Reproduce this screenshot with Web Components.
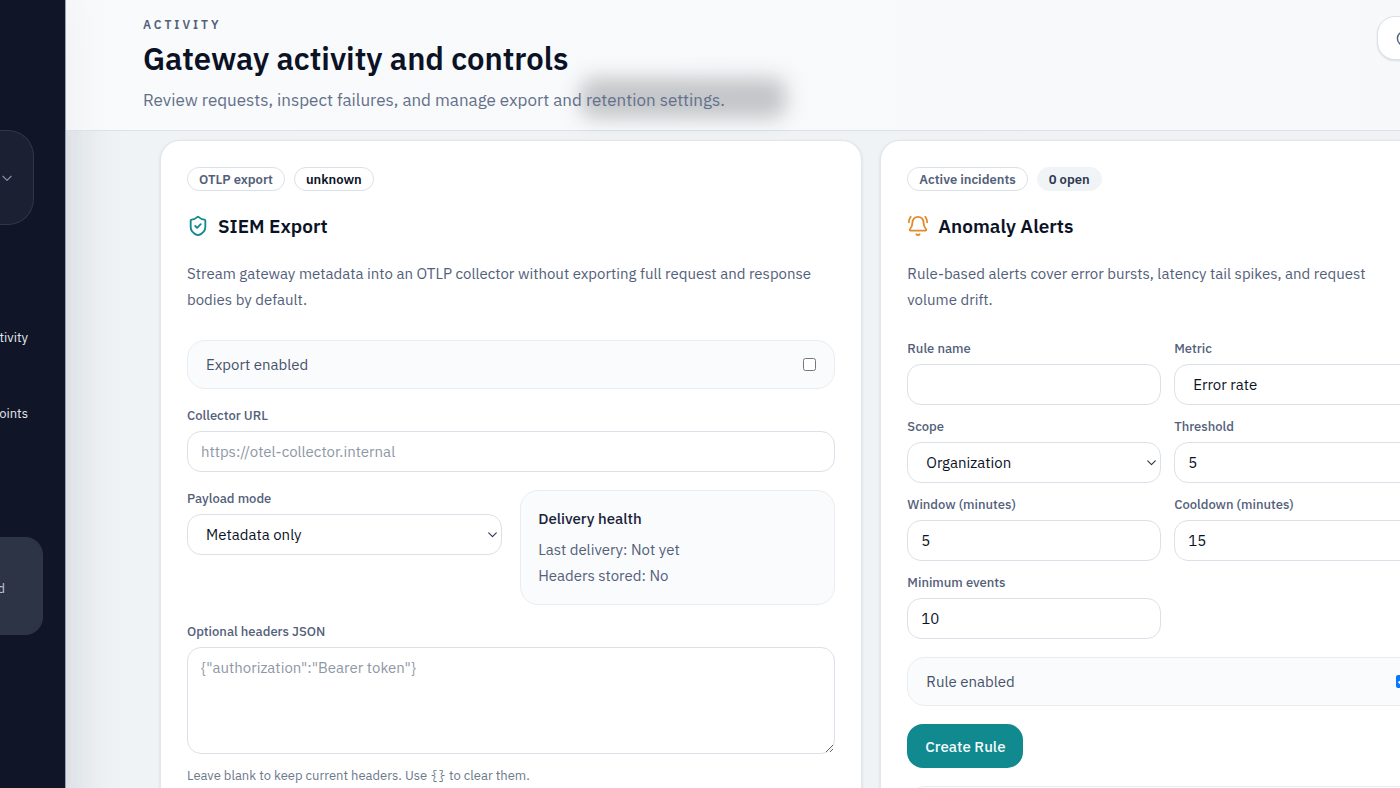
<!DOCTYPE html>
<html lang="en">
<head>
<meta charset="utf-8">
<title>Gateway activity and controls</title>
<style>
    html, body {
        margin: 0;
        height: 100%;
        overflow: hidden;
    }

    body {
        --ink: #0b1226;
        --muted: #53607a;
        --line: #dae1e8;
        --line-soft: #e9edf1;
        --teal: #10898f;
        --text: 15px;
        --small: 13px;
        background: #eff3f6;
        color: var(--ink);
        font-family: "IBM Plex Sans", Roboto, "Noto Sans", sans-serif;
        font-size: var(--text);
    }
</style>
</head>
<body>
<app-shell>
    <side-nav slot="nav"></side-nav>
    <page-header slot="header" eyebrow="ACTIVITY" heading="Gateway activity and controls">
        Review requests, inspect failures, and manage export and retention settings.
    </page-header>

    <panel-card heading="SIEM Export">
        <status-pill slot="pills">OTLP export</status-pill>
        <status-pill slot="pills" tone="strong">unknown</status-pill>
        <ui-icon slot="icon" name="shield"></ui-icon>
        <span slot="intro">Stream gateway metadata into an OTLP collector without exporting full request and response bodies by default.</span>
        <toggle-row label="Export enabled"></toggle-row>
        <form-field label="Collector URL" placeholder="https://otel-collector.internal"></form-field>
        <field-grid wide>
            <form-field label="Payload mode" kind="select" value="Metadata only"></form-field>
            <health-box heading="Delivery health">
                <span>Last delivery: Not yet</span>
                <span>Headers stored: No</span>
            </health-box>
        </field-grid>
        <form-field label="Optional headers JSON" kind="textarea" placeholder='{"authorization":"Bearer token"}'>
            <help-text slot="help">Leave blank to keep current headers. Use <code>{}</code> to clear them.</help-text>
        </form-field>
    </panel-card>

    <panel-card heading="Anomaly Alerts">
        <status-pill slot="pills">Active incidents</status-pill>
        <status-pill slot="pills" tone="filled">0 open</status-pill>
        <ui-icon slot="icon" name="bell"></ui-icon>
        <span slot="intro">Rule-based alerts cover error bursts, latency tail spikes, and request volume drift.</span>
        <field-grid>
            <form-field label="Rule name"></form-field>
            <form-field label="Metric" kind="select" value="Error rate"></form-field>
            <form-field label="Scope" kind="select" value="Organization"></form-field>
            <form-field label="Threshold" value="5"></form-field>
            <form-field label="Window (minutes)" value="5"></form-field>
            <form-field label="Cooldown (minutes)" value="15"></form-field>
            <form-field label="Minimum events" value="10"></form-field>
        </field-grid>
        <toggle-row label="Rule enabled" checked></toggle-row>
        <action-button>Create Rule</action-button>
        <health-box></health-box>
    </panel-card>
</app-shell>

<script>
const icons = {
    shield: `<path d="M20 13c0 5-3.5 7.5-7.66 8.95a1 1 0 0 1-.67-.01C7.5 20.5 4 18 4 13V6a1 1 0 0 1 1-1c2 0 4.5-1.2 6.24-2.72a1.17 1.17 0 0 1 1.52 0C14.51 3.81 17 5 19 5a1 1 0 0 1 1 1z"/><path d="m9 12 2 2 4-4"/>`,
    bell: `<path d="M10.268 21a2 2 0 0 0 3.464 0"/><path d="M22 8c0-2.3-.8-4.3-2-6"/><path d="M3.262 15.326A1 1 0 0 0 4 17h16a1 1 0 0 0 .74-1.673C19.41 13.956 18 12.499 18 8A6 6 0 0 0 6 8c0 4.499-1.411 5.956-2.738 7.326"/><path d="M4 2C2.8 3.7 2 5.7 2 8"/>`,
    chevron: `<path d="m5 9 7 7 7-7"/>`,
    clock: `<circle cx="12" cy="12" r="10"/><path d="M12 6v6l4 2"/>`
};

class AppShell extends HTMLElement {
    constructor() {
        super();
        this.attachShadow({ mode: "open" }).innerHTML = /* html */ `
        <style>
            /* the layout is wider than the window and runs off its right edge */
            :host {
                display: grid;
                grid-template-columns: 66px minmax(0, 1fr);
                width: calc(100vw + 150px);
                height: 100vh;
                overflow: hidden;
            }

            .main {
                min-width: 0;
            }

            .panels {
                display: grid;
                grid-template-columns: minmax(0, 11fr) minmax(0, 9fr);
                gap: 18px;
                align-items: start;
                padding: 9px 95px 40px 94px;
            }
        </style>
        <slot name="nav"></slot>
        <div class="main">
            <slot name="header"></slot>
            <main class="panels"><slot></slot></main>
        </div>
        `;
    }
}

class SideNav extends HTMLElement {
    constructor() {
        super();
        this.attachShadow({ mode: "open" }).innerHTML = /* html */ `
        <style>
            :host {
                display: block;
                box-sizing: border-box;
                background: #101628;
                border-right: 1px solid #98a1b2;
                box-shadow: 0 0 56px rgba(20, 26, 36, 0.16);
                color: #e3e7ee;
                font-size: var(--small);
            }

            nav {
                display: flex;
                flex-direction: column;
                align-items: flex-start;
                padding-top: 130px;
            }

            .switcher, .account {
                box-sizing: border-box;
                display: flex;
                align-items: center;
                border: 1px solid #2f3648;
                border-left: 0;
            }

            .switcher {
                width: 34px;
                height: 95px;
                padding: 0;
                background: #1b2133;
                border-radius: 0 26px 26px 0;
                color: #8390a5;
            }

            .account {
                justify-content: flex-end;
                width: 43px;
                height: 98px;
                margin-top: 113px;
                background: #2d3445;
                border-radius: 0 18px 18px 0;
                padding: 4px 37px 0 0;
                color: #c0c6d1;
            }

            a {
                width: 28px;
                line-height: 20px;
                color: inherit;
                text-decoration: none;
                display: flex;
                justify-content: flex-end;
            }

            .first {
                margin-top: 103px;
            }

            .second {
                margin-top: 56px;
            }
        </style>
        <nav>
            <button class="switcher" aria-label="Switch workspace"><ui-icon name="chevron" size="14"></ui-icon></button>
            <a class="first" href="#activity">tivity</a>
            <a class="second" href="#endpoints">oints</a>
            <div class="account">d</div>
        </nav>
        `;
    }
}

class PageHeader extends HTMLElement {
    constructor() {
        super();
        this.attachShadow({ mode: "open" }).innerHTML = /* html */ `
        <style>
            :host {
                display: block;
                position: relative;
                box-sizing: border-box;
                background: linear-gradient(90deg, rgba(250, 251, 252, 0.7), #f9fafb 70px, #f7f9fa 60%, #f6f8fa);
                border-bottom: 1px solid #dbe1e7;
            }

            header {
                position: relative;
                display: flex;
                justify-content: space-between;
                align-items: flex-start;
                padding: 16px 77px;
            }

            .eyebrow {
                margin: 0;
                font-size: 12px;
                font-weight: 600;
                line-height: 18px;
                letter-spacing: 3px;
                color: var(--muted);
            }

            h1 {
                margin: 4px 0 6px;
                font-size: 31px;
                font-weight: 600;
                line-height: 42px;
            }

            .lead {
                margin: 0;
                font-size: 17px;
                line-height: 28px;
                color: #64708a;
            }

            /* dark smudge of whatever scrolls under the frosted header */
            .smudge {
                position: absolute;
                left: 514px;
                top: 78px;
                width: 206px;
                height: 40px;
                border-radius: 14px;
                background: rgba(20, 26, 36, 0.23);
                filter: blur(10px);
            }

            button {
                box-sizing: border-box;
                width: 96px;
                height: 44px;
                padding: 0 18px;
                display: flex;
                align-items: center;
                color: var(--muted);
                background: #fff;
                border: 1px solid var(--line);
                border-radius: 18px;
                box-shadow: 0 1px 2px rgba(15, 23, 42, 0.12);
            }
        </style>
        <div class="smudge"></div>
        <header>
            <div>
                <p class="eyebrow"></p>
                <h1></h1>
                <p class="lead"><slot></slot></p>
            </div>
            <button aria-label="History"><ui-icon name="clock" size="17"></ui-icon></button>
        </header>
        `;
    }

    connectedCallback() {
        this.shadowRoot.querySelector('.eyebrow').textContent = this.getAttribute('eyebrow');
        this.shadowRoot.querySelector('h1').textContent = this.getAttribute('heading');
    }
}

class PanelCard extends HTMLElement {
    constructor() {
        super();
        this.attachShadow({ mode: "open" }).innerHTML = /* html */ `
        <style>
            :host {
                display: block;
                box-sizing: border-box;
                min-width: 0;
                padding: 26px;
                background: #fff;
                border: 1px solid #e2e7eb;
                border-radius: 20px;
                box-shadow: 0 1px 3px rgba(15, 23, 42, 0.12);
            }

            .pills {
                display: flex;
                gap: 9px;
            }

            h2 {
                display: flex;
                align-items: center;
                gap: 9px;
                margin: 22px 0;
                font-size: 19px;
                font-weight: 600;
                line-height: 26px;
            }

            .intro {
                margin: 0 0 27px;
                padding-right: 18px;
                line-height: 26px;
                color: var(--muted);
            }

            .body {
                display: flex;
                flex-direction: column;
                gap: 18px;
            }
        </style>
        <div class="pills"><slot name="pills"></slot></div>
        <h2><slot name="icon"></slot><span class="title"></span></h2>
        <p class="intro"><slot name="intro"></slot></p>
        <div class="body"><slot></slot></div>
        `;
    }

    connectedCallback() {
        this.shadowRoot.querySelector('.title').textContent = this.getAttribute('heading');
    }
}

class StatusPill extends HTMLElement {
    constructor() {
        super();
        this.attachShadow({ mode: "open" }).innerHTML = /* html */ `
        <style>
            :host {
                box-sizing: border-box;
                display: inline-flex;
                align-items: center;
                height: 24px;
                padding: 0 11px;
                border: 1px solid var(--line);
                border-radius: 12px;
                font-size: 13px;
                font-weight: 600;
                color: var(--muted);
            }

            :host([tone="strong"]) {
                color: var(--ink);
            }

            :host([tone="filled"]) {
                color: #2c3850;
                background: #f0f4f7;
                border-color: #f0f4f7;
            }
        </style>
        <slot></slot>
        `;
    }
}

class UiIcon extends HTMLElement {
    constructor() {
        super();
        this.attachShadow({ mode: "open" });
    }

    connectedCallback() {
        const size = this.getAttribute('size') || 22;

        this.shadowRoot.innerHTML = /* html */ `
        <style>
            :host {
                display: inline-flex;
                flex: none;
            }

            :host([name="shield"]) {
                color: var(--teal);
            }

            :host([name="bell"]) {
                color: #e28a2b;
            }
        </style>
        <svg width="${size}" height="${size}" viewBox="0 0 24 24" fill="none" stroke="currentColor"
            stroke-width="2" stroke-linecap="round" stroke-linejoin="round" aria-hidden="true">${icons[this.getAttribute('name')]}</svg>
        `;
    }
}

class FieldGrid extends HTMLElement {
    constructor() {
        super();
        this.attachShadow({ mode: "open" }).innerHTML = /* html */ `
        <style>
            :host {
                display: grid;
                grid-template-columns: repeat(2, minmax(0, 1fr));
                gap: 13px;
                align-items: start;
            }

            :host([wide]) {
                gap: 18px;
            }
        </style>
        <slot></slot>
        `;
    }
}

class FormField extends HTMLElement {
    constructor() {
        super();
        this.attachShadow({ mode: "open" });
    }

    connectedCallback() {
        this.shadowRoot.innerHTML = /* html */ `
        <style>
            :host {
                display: block;
            }

            label {
                display: block;
                margin-bottom: 7px;
                font-size: var(--small);
                font-weight: 500;
                line-height: 17px;
                color: var(--muted);
            }

            .control {
                position: relative;
                display: flex;
            }

            input, select, textarea {
                box-sizing: border-box;
                width: 100%;
                height: 41px;
                margin: 0;
                padding: 0 13px;
                color: var(--ink);
                background: #fff;
                border: 1px solid var(--line);
                border-radius: 14px;
                font: inherit;
                outline: none;
            }

            select {
                appearance: none;
                padding: 0 18px;
            }

            textarea {
                height: 107px;
                padding: 8px 13px;
                line-height: 24px;
                resize: vertical;
            }

            ::placeholder {
                color: #8f98a6;
                opacity: 1;
            }

            ui-icon {
                position: absolute;
                right: 3px;
                top: 14px;
                color: #28344a;
                pointer-events: none;
            }
        </style>
        <label for="control"></label>
        <div class="control"></div>
        <slot name="help"></slot>
        `;

        const kind = this.getAttribute('kind') || 'input';
        const value = this.getAttribute('value') || '';
        const control = document.createElement(kind);
        const wrap = this.shadowRoot.querySelector('.control');

        this.shadowRoot.querySelector('label').textContent = this.getAttribute('label');
        control.id = 'control';
        wrap.appendChild(control);

        if (kind === 'select') {
            control.add(new Option(value));
            const arrow = document.createElement('ui-icon');
            arrow.setAttribute('name', 'chevron');
            arrow.setAttribute('size', '13');
            wrap.appendChild(arrow);
        } else {
            control.value = value;
            control.placeholder = this.getAttribute('placeholder') || '';
        }
    }
}

class HelpText extends HTMLElement {
    constructor() {
        super();
        this.attachShadow({ mode: "open" }).innerHTML = /* html */ `
        <style>
            :host {
                display: block;
                margin-top: 9px;
                font-size: var(--small);
                line-height: 26px;
                color: #6d788c;
            }

            ::slotted(code) {
                font-family: "IBM Plex Mono", "Liberation Mono", monospace;
                font-size: 13px;
            }
        </style>
        <slot></slot>
        `;
    }
}

class ToggleRow extends HTMLElement {
    constructor() {
        super();
        this.attachShadow({ mode: "open" }).innerHTML = /* html */ `
        <style>
            :host {
                display: block;
            }

            label {
                box-sizing: border-box;
                height: 49px;
                padding: 0 18px;
                display: flex;
                justify-content: space-between;
                align-items: center;
                color: #47536a;
                background: #fafbfc;
                border: 1px solid var(--line-soft);
                border-radius: 18px;
            }

            input {
                width: 13px;
                height: 13px;
                margin: 0;
                accent-color: #0a75ff;
            }
        </style>
        <label><span></span><input type="checkbox"></label>
        `;
    }

    connectedCallback() {
        this.shadowRoot.querySelector('span').textContent = this.getAttribute('label');
        this.shadowRoot.querySelector('input').checked = this.hasAttribute('checked');
    }
}

class HealthBox extends HTMLElement {
    constructor() {
        super();
        this.attachShadow({ mode: "open" }).innerHTML = /* html */ `
        <style>
            :host {
                box-sizing: border-box;
                display: flex;
                flex-direction: column;
                min-height: 115px;
                padding: 15px 17px;
                line-height: 26px;
                color: var(--muted);
                background: #fafbfc;
                border: 1px solid var(--line-soft);
                border-radius: 18px;
            }

            h3 {
                margin: 0 0 5px;
                font-size: var(--text);
                font-weight: 500;
                color: #18233a;
            }
        </style>
        <h3></h3>
        <slot></slot>
        `;
    }

    connectedCallback() {
        this.shadowRoot.querySelector('h3').textContent = this.getAttribute('heading') || '';
    }
}

class ActionButton extends HTMLElement {
    constructor() {
        super();
        this.attachShadow({ mode: "open" }).innerHTML = /* html */ `
        <style>
            :host {
                display: block;
            }

            button {
                height: 44px;
                padding: 0 18px;
                color: #f3fafa;
                background: var(--teal);
                border: 0;
                border-radius: 16px;
                font: inherit;
                font-weight: 500;
            }
        </style>
        <button><slot></slot></button>
        `;
    }
}

customElements.define("ui-icon", UiIcon);
customElements.define("app-shell", AppShell);
customElements.define("side-nav", SideNav);
customElements.define("page-header", PageHeader);
customElements.define("panel-card", PanelCard);
customElements.define("status-pill", StatusPill);
customElements.define("field-grid", FieldGrid);
customElements.define("form-field", FormField);
customElements.define("help-text", HelpText);
customElements.define("toggle-row", ToggleRow);
customElements.define("health-box", HealthBox);
customElements.define("action-button", ActionButton);
</script>
</body>
</html>
